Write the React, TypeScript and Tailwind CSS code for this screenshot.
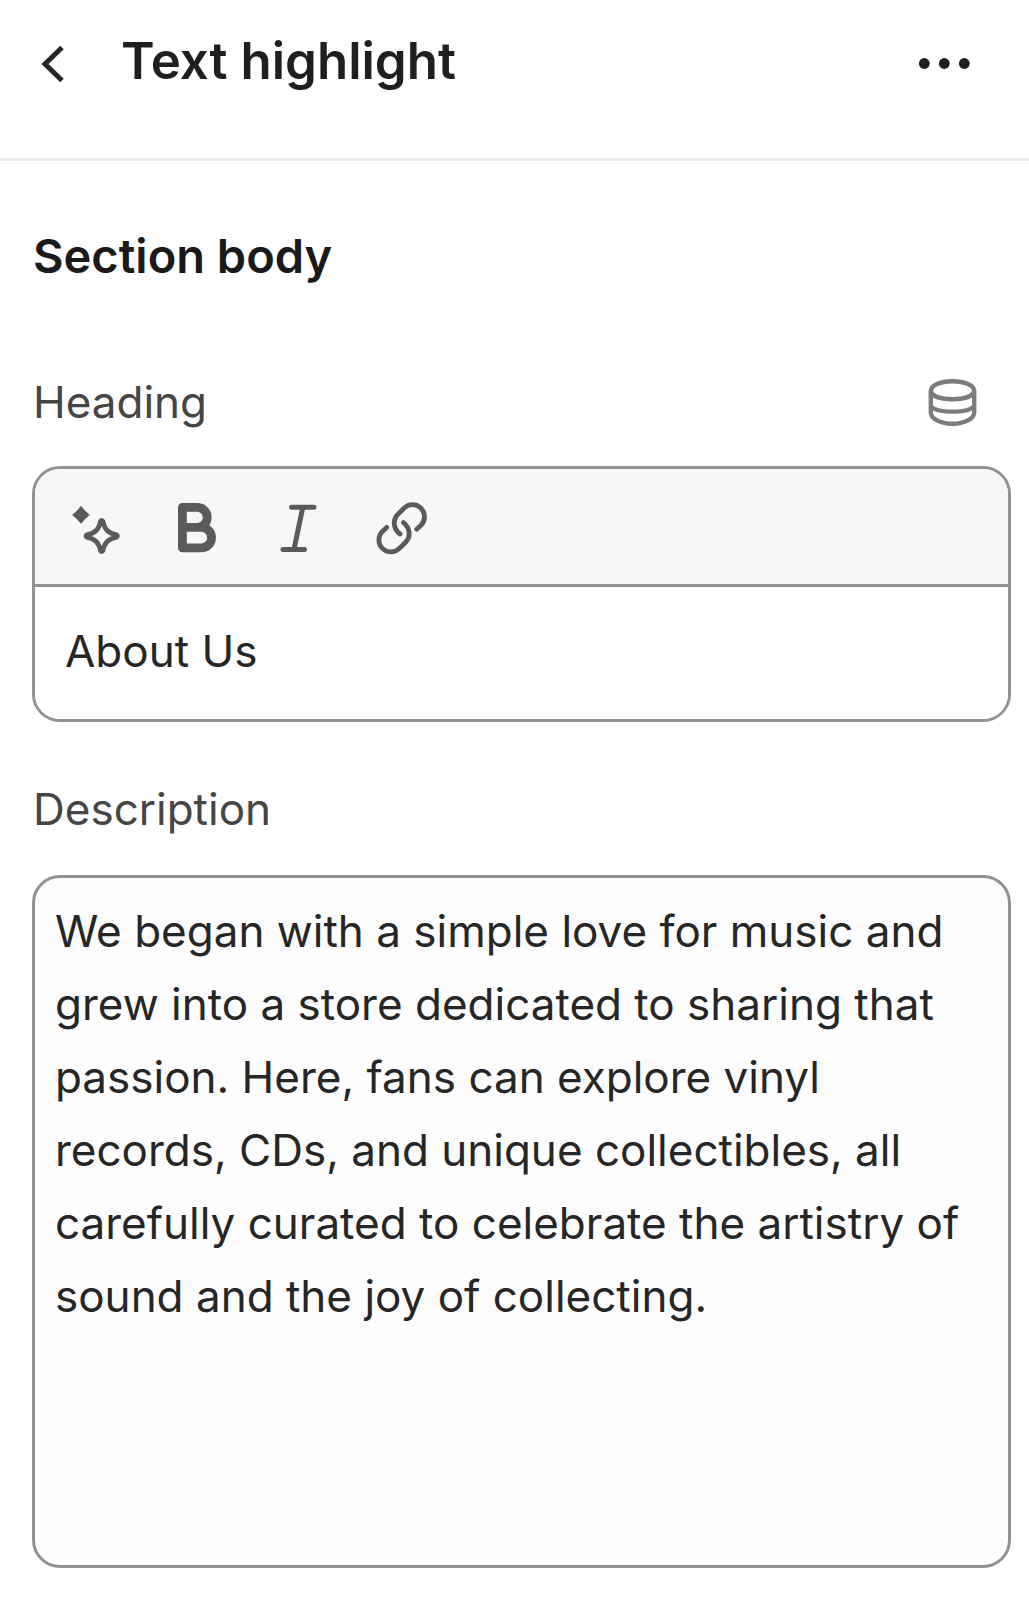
import { useState } from "react";
import type { ReactNode } from "react";

const DESCRIPTION =
  "We began with a simple love for music and grew into a store dedicated to sharing that passion. Here, fans can explore vinyl records, CDs, and unique collectibles, all carefully curated to celebrate the artistry of sound and the joy of collecting.";

function BackIcon() {
  return (
    <svg viewBox="0 0 56 56" className="size-14" fill="none" stroke="currentColor" strokeWidth="5" aria-hidden="true">
      <path d="M38 14.5L21 31L38 47.5" />
    </svg>
  );
}

function MoreIcon() {
  return (
    <svg viewBox="0 0 56 56" className="size-14" fill="currentColor" aria-hidden="true">
      <circle cx="7.3" cy="30.5" r="5.4" />
      <circle cx="27.3" cy="30.5" r="5.4" />
      <circle cx="47.3" cy="30.5" r="5.4" />
    </svg>
  );
}

function DatabaseIcon() {
  return (
    <svg viewBox="0 0 56 56" className="size-14" fill="none" stroke="currentColor" strokeWidth="4.4" aria-hidden="true">
      <path d="M5.8 17C5.8 11.5 15 7.2 27.5 7.2S49.2 11.5 49.2 17V38.5C49.2 44.5 40 49.8 27.5 49.8S5.8 44.5 5.8 38.5Z" />
      <path d="M5.8 17C7 22.5 16 25.2 27.5 25.2S48 22.5 49.2 17" />
      <path d="M5.8 31.5C8 35.5 17 37.6 27.5 37.6S47 35.5 49.2 31.5" />
    </svg>
  );
}

function MagicIcon() {
  return (
    <svg viewBox="0 0 60 60" className="size-15" fill="none" stroke="currentColor" strokeLinejoin="round" aria-hidden="true">
      <path fill="currentColor" strokeWidth="1" d="M15 9.4Q18.6 14.4 23.3 17.9Q18.6 21.4 15 26.2Q11.4 21.4 6.7 17.9Q11.4 14.4 15 9.4Z" />
      <path strokeWidth="4.8" d="M34.6 24.2Q35.7 22.4 36.8 24.2C38.6 32.5 42.2 36.1 50.5 37.9Q52.3 39 50.5 40.1C42.2 41.9 38.6 45.5 36.8 53.8Q35.7 55.6 34.6 53.8C32.8 45.5 29.2 41.9 20.9 40.1Q19.1 39 20.9 37.9C29.2 36.1 32.8 32.5 34.6 24.2Z" />
    </svg>
  );
}

function BoldIcon() {
  return (
    <svg viewBox="0 0 60 60" className="size-15" fill="none" stroke="currentColor" strokeWidth="8.8" strokeLinejoin="round" aria-hidden="true">
      <path d="M14.4 30.4V10.4H29.2a10 10 0 0 1 0 20H14.4V50.9H33.3a10.2 10.2 0 0 0 0-20.5H27" />
    </svg>
  );
}

function ItalicIcon() {
  return (
    <svg viewBox="0 0 60 60" className="size-15" fill="none" stroke="currentColor" strokeWidth="5" strokeLinecap="round" aria-hidden="true">
      <path d="M21.5 10.2H44M13 52.5H34.5M32.8 10.2L24 52.5" />
    </svg>
  );
}

function LinkIcon() {
  return (
    <svg viewBox="0 0 60 60" className="size-15" fill="none" stroke="currentColor" strokeWidth="4.8" strokeLinecap="round" aria-hidden="true">
      <path d="M44.7 32.2L49 28.2A12 12 0 0 0 32 11.2L25.8 17.4C20.5 22.8 21 31.5 28 37" />
      <path d="M14.7 30.4L10.4 34.4A12 12 0 0 0 27.4 51.4L33.6 45.2C38.9 39.8 38.4 31.1 31.4 25.6" />
    </svg>
  );
}

function ToolButton({ label, children }: { label: string; children: ReactNode }) {
  return (
    <button type="button" aria-label={label} className="size-15 shrink-0">
      {children}
    </button>
  );
}

export default function App() {
  const [heading, setHeading] = useState("About Us");
  const [description, setDescription] = useState(DESCRIPTION);

  return (
    <div className="min-h-screen bg-white font-['Inter',sans-serif] text-[#262626]">
      <header className="flex items-center gap-[41px] border-b-3 border-[#ebebeb] pt-[29px] pr-14 pb-[65px] pl-6">
        <button type="button" aria-label="Back" className="shrink-0">
          <BackIcon />
        </button>
        <h1 className="flex-1 text-[51px] leading-[64px] font-semibold text-[#1f1f1f]">Text highlight</h1>
        <button type="button" aria-label="More actions" className="shrink-0 text-[#1f1f1f]">
          <MoreIcon />
        </button>
      </header>

      <main className="pt-[67px] pr-[18px] pb-8 pl-8">
        <h2 className="px-px text-[47px] leading-14 font-semibold text-[#1a1a1a]">Section body</h2>

        <div className="mt-[90px] flex items-center justify-between px-px">
          <label htmlFor="heading" className="text-[44px] leading-14 text-[#454545]">
            Heading
          </label>
          <button type="button" aria-label="Connect dynamic source" className="mr-[29px] shrink-0 text-[#7c7c7c]">
            <DatabaseIcon />
          </button>
        </div>
        <div className="mt-9 overflow-hidden rounded-[28px] border-3 border-[#929292]">
          <div className="flex h-[118px] items-center gap-[42px] border-b-3 border-[#929292] bg-[#f7f7f7] px-[31px] text-[#5a5a5a]">
            <ToolButton label="Generate text">
              <MagicIcon />
            </ToolButton>
            <ToolButton label="Bold">
              <BoldIcon />
            </ToolButton>
            <ToolButton label="Italic">
              <ItalicIcon />
            </ToolButton>
            <ToolButton label="Insert link">
              <LinkIcon />
            </ToolButton>
          </div>
          <input
            id="heading"
            type="text"
            value={heading}
            onChange={(e) => setHeading(e.target.value)}
            className="block h-[132px] w-full bg-white px-[30px] pb-1 text-[44px] outline-none"
          />
        </div>

        <label htmlFor="description" className="mt-[59px] block px-px text-[44px] leading-14 text-[#454545]">
          Description
        </label>
        <textarea
          id="description"
          rows={9}
          value={description}
          onChange={(e) => setDescription(e.target.value)}
          className="mt-[38px] block w-full resize-none overflow-hidden rounded-[28px] border-3 border-[#929292] bg-[#fdfdfd] px-5 pt-[17px] pb-[13px] text-[44px] leading-[73px] outline-none"
        />
      </main>
    </div>
  );
}
